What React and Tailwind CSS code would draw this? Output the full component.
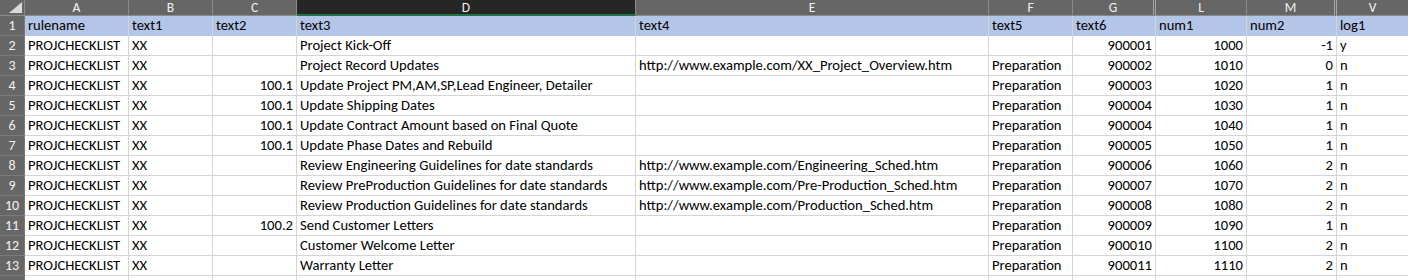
const cols = [
  { key: 'A', w: 'w-[104px]' },
  { key: 'B', w: 'w-[84px]' },
  { key: 'C', w: 'w-[84px]', right: true },
  { key: 'D', w: 'w-[339px]' },
  { key: 'E', w: 'w-[353px]' },
  { key: 'F', w: 'w-[84px]' },
  { key: 'G', w: 'w-[83px]', right: true },
  { key: 'L', w: 'w-[91px]', right: true },
  { key: 'M', w: 'w-[90px]', right: true },
  { key: 'V', w: 'w-[72px]' },
]

const header = ['rulename', 'text1', 'text2', 'text3', 'text4', 'text5', 'text6', 'num1', 'num2', 'log1']

const ex = 'http://www.example.com/'

const rows = [
  ['PROJCHECKLIST', 'XX', '', 'Project Kick-Off', '', '', '900001', '1000', '-1', 'y'],
  ['PROJCHECKLIST', 'XX', '', 'Project Record Updates', ex + 'XX_Project_Overview.htm', 'Preparation', '900002', '1010', '0', 'n'],
  ['PROJCHECKLIST', 'XX', '100.1', 'Update Project PM,AM,SP,Lead Engineer, Detailer', '', 'Preparation', '900003', '1020', '1', 'n'],
  ['PROJCHECKLIST', 'XX', '100.1', 'Update Shipping Dates', '', 'Preparation', '900004', '1030', '1', 'n'],
  ['PROJCHECKLIST', 'XX', '100.1', 'Update Contract Amount based on Final Quote', '', 'Preparation', '900004', '1040', '1', 'n'],
  ['PROJCHECKLIST', 'XX', '100.1', 'Update Phase Dates and Rebuild', '', 'Preparation', '900005', '1050', '1', 'n'],
  ['PROJCHECKLIST', 'XX', '', 'Review Engineering Guidelines for date standards', ex + 'Engineering_Sched.htm', 'Preparation', '900006', '1060', '2', 'n'],
  ['PROJCHECKLIST', 'XX', '', 'Review PreProduction Guidelines for date standards', ex + 'Pre-Production_Sched.htm', 'Preparation', '900007', '1070', '2', 'n'],
  ['PROJCHECKLIST', 'XX', '', 'Review Production Guidelines for date standards', ex + 'Production_Sched.htm', 'Preparation', '900008', '1080', '2', 'n'],
  ['PROJCHECKLIST', 'XX', '100.2', 'Send Customer Letters', '', 'Preparation', '900009', '1090', '1', 'n'],
  ['PROJCHECKLIST', 'XX', '', 'Customer Welcome Letter', '', 'Preparation', '900010', '1100', '2', 'n'],
  ['PROJCHECKLIST', 'XX', '', 'Warranty Letter', '', 'Preparation', '900011', '1110', '2', 'n'],
]

function ColumnHeaders() {
  return (
    <div className="flex h-[16px] text-[13.5px] leading-[15px] text-[#f2f2f2]">
      <div className="relative w-[25px] shrink-0 bg-[#666666] border-r border-b border-[#8a8a8a]">
        <svg className="absolute right-[2px] bottom-[2px]" width="13" height="11" viewBox="0 0 13 11">
          <polygon points="13,0 13,11 0,11" fill="#d9d9d9" />
        </svg>
      </div>
      {cols.map((c) => {
        const selected = c.key === 'D'
        const hidden = c.key === 'G' || c.key === 'M'
        return (
          <div
            key={c.key}
            className={
              c.w +
              ' shrink-0 text-center ' +
              (selected
                ? 'bg-[#262626] border-b-2 border-b-[#217346] border-r border-r-[#8a8a8a]'
                : 'bg-[#666666] border-b border-b-[#8a8a8a] ' +
                  (hidden ? 'border-r-[3px] border-double border-r-[#a6a6a6]' : 'border-r border-r-[#8a8a8a]'))
            }
          >
            {c.key}
          </div>
        )
      })}
    </div>
  )
}

function Row({ num, cells, first }) {
  return (
    <div className={'flex h-[20px] leading-[19px] ' + (first ? 'bg-[#b4c6e7]' : 'bg-white')}>
      <div className="w-[25px] shrink-0 bg-[#666666] text-[#f2f2f2] text-center text-[14px] border-r border-b border-[#7a7a7a]">
        {num}
      </div>
      {cells.map((v, i) => {
        const c = cols[i]
        const right = !first && c.right
        return (
          <div
            key={i}
            className={
              c.w +
              ' shrink-0 px-[3px] overflow-hidden whitespace-nowrap text-black ' +
              (first ? 'border-b border-b-[#b4c6e7] ' : 'border-b border-b-[#d4d4d4] ') +
              'border-r border-r-[#d4d4d4] ' +
              (right ? 'text-right' : 'text-left')
            }
          >
            {v}
          </div>
        )
      })}
    </div>
  )
}

export default function App() {
  return (
    <div className="w-[1408px] h-[280px] overflow-hidden bg-white font-[family-name:Carlito,Lato,sans-serif] text-[14.6px]">
      <ColumnHeaders />
      <Row num={1} cells={header} first />
      {rows.map((r, i) => (
        <Row key={i} num={i + 2} cells={r} />
      ))}
      <Row num="" cells={['', '', '', '', '', '', '', '', '', '']} />
    </div>
  )
}
